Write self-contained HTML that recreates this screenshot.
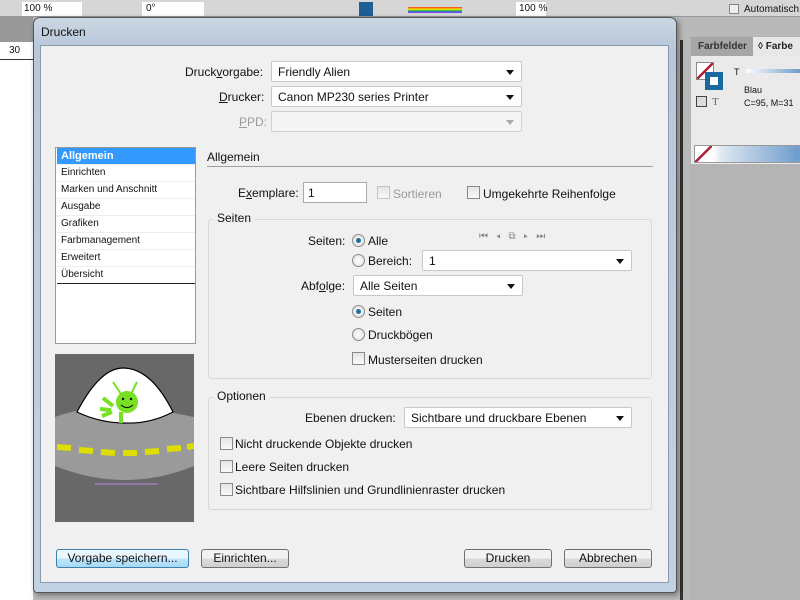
<!DOCTYPE html>
<html><head><meta charset="utf-8"><style>
*{margin:0;padding:0;box-sizing:border-box}
body{width:800px;height:600px;overflow:hidden;background:#b9b9b9;font-family:"Liberation Sans",sans-serif;font-size:12px;color:#111;position:relative}
.a{position:absolute}
.t{position:absolute;white-space:nowrap;line-height:14px}
.sel{position:absolute;background:#fff;border:1px solid #c8c8c8;border-radius:2px;height:21px;padding:3px 6px;font-size:12px;line-height:14px}
.sel:after{content:"";position:absolute;right:7px;top:8px;border:4px solid transparent;border-top:5px solid #111;border-bottom:0}
.sel.dis:after{border-top-color:#aaa}
.cb{position:absolute;width:13px;height:13px;border:1px solid #8a8a8a;background:linear-gradient(#e4e4e4,#fafafa)}
.rb{position:absolute;width:13px;height:13px;border-radius:50%;border:1px solid #8a8a8a;background:radial-gradient(#fff,#ddd)}
.rb.on:after{content:"";position:absolute;left:3px;top:3px;width:5px;height:5px;border-radius:50%;background:#1d6fa8}
.btn{position:absolute;height:19px;border:1px solid #707070;border-radius:3px;background:linear-gradient(#f2f2f2 50%,#dcdcdc 50%,#cfcfcf);text-align:center;line-height:17px;font-size:12px}
.grp{position:absolute;border:1px solid #d8d8d8;border-radius:3px}
.li{position:absolute;left:1px;width:138px;height:17px;font-size:10px;line-height:16px;padding-left:4px;border-bottom:1px solid #eee}
</style></head><body>
<div class="a" style="left:0;top:0;width:800px;height:17px;background:#d6d6d6;border-bottom:1px solid #999"></div>
<div class="a" style="left:22px;top:2px;width:60px;height:14px;background:#fff"></div>
<div class="t" style="left:24px;top:2px;font-size:10px">100 %</div>
<div class="a" style="left:142px;top:2px;width:62px;height:14px;background:#fff"></div>
<div class="t" style="left:146px;top:2px;font-size:10px">0°</div>
<div class="a" style="left:359px;top:2px;width:14px;height:14px;background:#1c5e96"></div>
<div class="a" style="left:408px;top:7px;width:54px;height:6px;background:linear-gradient(#e33,#f90,#ee0,#3b3,#36f,#a3c)"></div>
<div class="a" style="left:516px;top:2px;width:30px;height:14px;background:#fff"></div>
<div class="t" style="left:519px;top:2px;font-size:10px">100 %</div>
<div class="a" style="left:729px;top:4px;width:10px;height:10px;border:1px solid #888;background:#eee"></div>
<div class="t" style="left:744px;top:3px;font-size:10px">Automatisch</div>
<div class="a" style="left:0;top:17px;width:33px;height:583px;background:#fff"></div>
<div class="a" style="left:0;top:17px;width:33px;height:25px;background:#999"></div>
<div class="a" style="left:0;top:42px;width:33px;height:18px;background:#fff;border-bottom:1px solid #333"></div>
<div class="t" style="left:9px;top:44px;font-size:10px">30</div>
<div class="a" style="left:677px;top:17px;width:123px;height:583px;background:#b9b9b9"></div>
<div class="a" style="left:680px;top:40px;width:3px;height:560px;background:#333"></div>
<div class="a" style="left:690px;top:36px;width:110px;height:564px;background:#b4b4b4"></div>
<div class="a" style="left:691px;top:37px;width:62px;height:19px;background:#a6a6a6"></div>
<div class="t" style="left:698px;top:40px;font-size:10px;font-weight:bold;color:#333">Farbfelder</div>
<div class="a" style="left:753px;top:37px;width:47px;height:19px;background:#e8e8e8"></div>
<div class="t" style="left:758px;top:40px;font-size:10px;font-weight:bold;color:#222">◊ Farbe</div>
<div class="a" style="left:691px;top:56px;width:109px;height:108px;background:#eaeaea"></div>
<div class="a" style="left:696px;top:62px;width:18px;height:18px;border:1px solid #888;background:linear-gradient(135deg,#fff 44%,#b02030 44%,#b02030 56%,#fff 56%)"></div>
<div class="a" style="left:705px;top:72px;width:18px;height:18px;background:#1a6aa0"></div>
<div class="a" style="left:710px;top:77px;width:8px;height:8px;background:#fff"></div>
<div class="t" style="left:734px;top:65px;font-size:9px">T</div>
<div class="a" style="left:746px;top:69px;width:54px;height:4px;background:linear-gradient(90deg,#fff,#6d9ccb)"></div>
<div class="t" style="left:744px;top:83px;font-size:9px">Blau</div>
<div class="t" style="left:744px;top:96px;font-size:9px">C=95, M=31</div>
<div class="a" style="left:696px;top:96px;width:11px;height:11px;border:1px solid #444;background:#ddd"></div>
<div class="t" style="left:712px;top:95px;font-size:11px;color:#666;font-family:'Liberation Serif',serif">T</div>
<div class="a" style="left:694px;top:145px;width:106px;height:18px;background:linear-gradient(90deg,#fff 18%,#dfe8f2 25%,#6d9ccb);border:1px solid #999"></div>
<div class="a" style="left:695px;top:146px;width:17px;height:16px;background:linear-gradient(135deg,#fff 44%,#b02030 44%,#b02030 56%,#fff 56%)"></div>
<div class="a" style="left:33px;top:17px;width:644px;height:576px;border-radius:7px 7px 4px 4px;background:linear-gradient(#cbd6e3,#b8c8da 30px,#c3d2e2);border:1px solid #555;box-shadow:2px 2px 6px rgba(0,0,0,.4)"></div>
<div class="t" style="left:41px;top:25px;font-size:12px">Drucken</div>
<div class="a" style="left:40px;top:45px;width:629px;height:538px;background:#f0f0f0;border:1px solid #8a9bb0"></div>
<div class="t" style="left:185px;top:65px">Druck<u>v</u>orgabe:</div>
<div class="sel" style="left:271px;top:61px;width:251px">Friendly Alien</div>
<div class="t" style="left:219px;top:90px"><u>D</u>rucker:</div>
<div class="sel" style="left:271px;top:86px;width:251px">Canon MP230 series Printer</div>
<div class="t" style="left:239px;top:115px;color:#9a9a9a"><u>P</u>PD:</div>
<div class="sel dis" style="left:271px;top:111px;width:251px;border-color:#cfcfcf;background:#f5f5f5"></div>
<div class="a" style="left:55px;top:147px;width:141px;height:197px;background:#fff;border:1px solid #9a9a9a">
<div class="li" style="top:0;background:#3399ff;color:#fff;font-weight:bold;font-size:11px">Allgemein</div>
<div class="li" style="top:17px">Einrichten</div>
<div class="li" style="top:34px">Marken und Anschnitt</div>
<div class="li" style="top:51px">Ausgabe</div>
<div class="li" style="top:68px">Grafiken</div>
<div class="li" style="top:85px">Farbmanagement</div>
<div class="li" style="top:102px">Erweitert</div>
<div class="li" style="top:119px;border-bottom:1px solid #222">Übersicht</div>
</div>
<div class="a" style="left:55px;top:354px;width:139px;height:168px;background:#686868;overflow:hidden">
<svg width="139" height="168" viewBox="0 0 139 168">
<path d="M0 63 Q30 52 60 54 Q100 54 139 63 L139 112 Q70 140 0 112Z" fill="#9a9a9a"/>
<path d="M22 58 Q45 14 68 14 Q96 14 118 58 Q95 70 70 69 Q45 69 22 58Z" fill="#fff" stroke="#000" stroke-width="1.2"/>
<path d="M66 40 L58 28 M76 40 L82 28" stroke="#77e022" stroke-width="2"/>
<circle cx="72" cy="48" r="11" fill="#77e022"/>
<path d="M58 52 L48 44 M56 56 L45 55 M57 58 L47 62 M66 58 L66 69" stroke="#77e022" stroke-width="4"/>
<path d="M66 51 Q72 56 78 51" stroke="#000" fill="none"/>
<circle cx="68" cy="45" r="1.2" fill="#000"/><circle cx="76" cy="45" r="1.2" fill="#000"/>
<path d="M2 93 L16 94 M24 96 L38 97 M46 98 L60 99 M68 99 L82 99 M90 98 L104 97 M112 95 L126 94 M132 93 L139 92" stroke="#dddd00" stroke-width="6"/>
<path d="M40 130 L103 130" stroke="#a07cc0" stroke-width="1.5"/>
</svg></div>
<div class="t" style="left:207px;top:150px">Allgemein</div>
<div class="a" style="left:207px;top:166px;width:446px;height:1px;background:#a0a0a0"></div>
<div class="t" style="left:238px;top:186px">E<u>x</u>emplare:</div>
<div class="a" style="left:303px;top:182px;width:64px;height:21px;background:#fff;border:1px solid #aaa"></div>
<div class="t" style="left:308px;top:186px">1</div>
<div class="cb" style="left:377px;top:186px;border-color:#c4c4c4"></div>
<div class="t" style="left:393px;top:187px;color:#9a9a9a">Sortieren</div>
<div class="cb" style="left:467px;top:186px"></div>
<div class="t" style="left:483px;top:187px">Umgekehrte Reihenfolge</div>
<div class="grp" style="left:208px;top:219px;width:444px;height:160px"></div>
<div class="t" style="left:213px;top:211px;background:#f0f0f0;padding:0 4px">Seiten</div>
<div class="t" style="left:308px;top:234px">Seiten:</div>
<div class="rb on" style="left:352px;top:234px"></div>
<div class="t" style="left:368px;top:234px">Alle</div>
<div class="t" style="left:479px;top:230px;font-size:10px;color:#888;letter-spacing:8px">⏮◂⧉▸⏭</div>
<div class="rb" style="left:352px;top:254px"></div>
<div class="t" style="left:368px;top:254px">Bereich:</div>
<div class="sel" style="left:422px;top:250px;width:210px">1</div>
<div class="t" style="left:301px;top:279px">Abf<u>o</u>lge:</div>
<div class="sel" style="left:353px;top:275px;width:170px">Alle Seiten</div>
<div class="rb on" style="left:352px;top:305px"></div>
<div class="t" style="left:368px;top:305px">Seiten</div>
<div class="rb" style="left:352px;top:328px"></div>
<div class="t" style="left:368px;top:328px">Druckbögen</div>
<div class="cb" style="left:352px;top:352px"></div>
<div class="t" style="left:368px;top:353px">Musterseiten drucken</div>
<div class="grp" style="left:208px;top:397px;width:444px;height:113px"></div>
<div class="t" style="left:213px;top:389px;background:#f0f0f0;padding:0 4px">Optionen</div>
<div class="t" style="left:305px;top:411px">Ebenen drucken:</div>
<div class="sel" style="left:404px;top:407px;width:228px">Sichtbare und druckbare Ebenen</div>
<div class="cb" style="left:220px;top:437px"></div>
<div class="t" style="left:235px;top:437px">Nicht druckende Objekte drucken</div>
<div class="cb" style="left:220px;top:460px"></div>
<div class="t" style="left:235px;top:460px">Leere Seiten drucken</div>
<div class="cb" style="left:220px;top:483px"></div>
<div class="t" style="left:235px;top:483px">Sichtbare Hilfslinien und Grundlinienraster drucken</div>
<div class="btn" style="left:56px;top:549px;width:133px;border-color:#3c7fb1;background:linear-gradient(#eaf6fd 50%,#bee6fd 50%,#a7d9f5)">Vorgabe speichern...</div>
<div class="btn" style="left:201px;top:549px;width:88px">Einrichten...</div>
<div class="btn" style="left:464px;top:549px;width:88px">Drucken</div>
<div class="btn" style="left:564px;top:549px;width:88px">Abbrechen</div>
</body></html>
